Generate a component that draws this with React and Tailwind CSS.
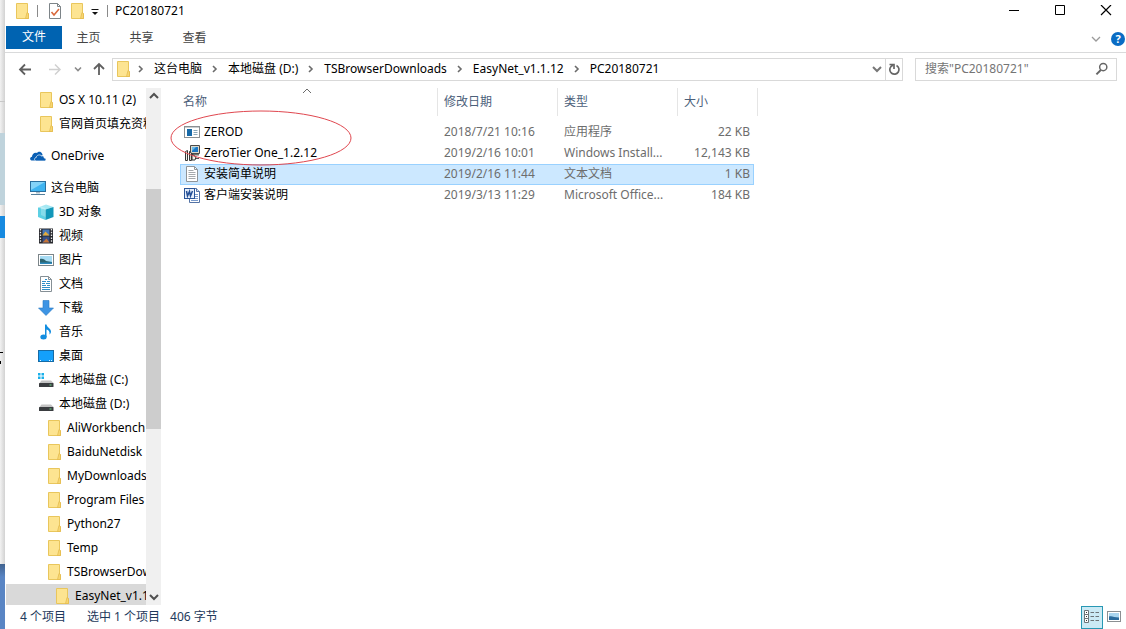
import React, { useState } from 'react';

const Folder = ({ className = '' }) => (
  <svg viewBox="0 0 16 16" className={`w-4 h-4 shrink-0 ${className}`}>
    <path d="M2.500.5h11v9.500l1 1v4.500h-12z" fill="#fde491" stroke="#e9c65c" />
    <path d="M13 9.500l-1.500 6h3v-5z" fill="#f7d672" stroke="#e3b94a" strokeWidth=".7" />
  </svg>
);

const Chevron = ({ d = 'M6 5l3 3-3 3', className = 'w-4 h-4', color = '#6b6b6b', width = 1.6 }) => (
  <svg viewBox="0 0 16 16" className={`shrink-0 ${className}`} fill="none" stroke={color} strokeWidth={width}>
    <path d={d} />
  </svg>
);

const Drive = () => (
  <>
    <path d="M3.500 8.500h9.500L15.500 11h-14z" fill="#c3c3c3" />
    <rect x="1" y="11" width="14.5" height="4" rx=".5" fill="#3a3d40" />
    <rect x="11.5" y="12.5" width="2" height="1" fill="#6fe08a" />
  </>
);

const sideIcons = {
  cloud: (
    <>
      <path d="M1.500 12.500C-.5 12-.3 9 2 8.700 2 6 4.500 4 7 5 8 3.200 11 3 12 5.500c.6 1.100.5 1 .5 1.700L7 8.500 5 12.500z" fill="#0a5fb4" />
      <path d="M6 13c-2-.3-2-3.200.2-3.500C6.500 7 10 6 11.500 8c1.500-.5 2.700.5 2.700 2 2.300.1 2.300 3 .3 3z" fill="#0a5fb4" stroke="#fff" strokeWidth=".7" />
    </>
  ),
  pc: (
    <>
      <rect x=".5" y="1.500" width="15" height="10" fill="#3fb4f0" stroke="#2a6f9e" />
      <path d="M1 2h14L1 10z" fill="#83d3f8" />
      <path d="M6 12h4v1.500H6z" fill="#a9bcc8" />
      <path d="M1 14.500h14" stroke="#557f9b" />
    </>
  ),
  cube: (
    <>
      <path d="M0 3.500L8 .5 15.500 3 7.500 5.500z" fill="#a5e8f3" />
      <path d="M0 3.500l7.500 2V16L0 13z" fill="#5dd0e4" />
      <path d="M7.500 5.500L15.500 3v10l-8 3z" fill="#1297b9" />
      <path d="M3 2.500l4.500 1.500v9L3 11z" fill="#fff" opacity=".25" />
    </>
  ),
  video: (
    <>
      <rect x="1" y=".5" width="14" height="15" fill="#27282d" />
      <path d="M2.500 1v14M13.500 1v14" stroke="#e8e8e8" strokeWidth="1.300" strokeDasharray="1.500 1.300" />
      <rect x="4.500" y="1.500" width="7" height="6" fill="#4577b8" />
      <path d="M4.500 7.500l3-4 4 4z" fill="#e3ab3c" />
      <rect x="4.500" y="8.500" width="7" height="6" fill="#354f88" />
      <path d="M4.500 14.500l4-4 3 4z" fill="#c57538" />
    </>
  ),
  picture: (
    <>
      <rect x=".5" y="2.500" width="15" height="11" fill="#fff" stroke="#7c8589" />
      <rect x="2" y="4" width="12" height="8" fill="#a7dcf4" />
      <path d="M2 7c3-1 5 1 6 2l6 1v2H2z" fill="#2c6470" />
      <path d="M2 10.500h12V12H2z" fill="#2c89bc" />
    </>
  ),
  doc: (
    <>
      <path d="M2.500.5h8l3 3v12h-11z" fill="#fff" stroke="#858f95" />
      <path d="M10.500.5v3h3" fill="none" stroke="#858f95" />
      <path d="M7 3.500h2M4 5.500h4M9 5.500h3M4 7.500h3M8 7.500h4M4 9.500h4M9 9.500h3M4 11.500h8M4 13.500h8" stroke="#2f8fc8" strokeWidth="1.200" />
    </>
  ),
  download: <path d="M5 .5h6V8h4.500L8 15.500.5 8H5z" fill="#3d94e4" stroke="#2879c5" strokeWidth=".6" />,
  music: (
    <>
      <path d="M7 .5h1.500c.5 3 4.500 4 4.500 7 0 1.300-.7 2.500-1.500 3 .5-3-1-4.500-3-5V13H7z" fill="#128de0" />
      <ellipse cx="5.500" cy="13" rx="3.200" ry="2.500" fill="#128de0" />
    </>
  ),
  desktop: (
    <>
      <rect x=".5" y="2.500" width="15" height="11" fill="#14a0fb" stroke="#176ba5" />
      <path d="M2 12.500h2M11 12.500h3" stroke="#dff2ff" strokeDasharray="1 1" />
    </>
  ),
  driveC: (
    <>
      <path d="M0 1h2.500v2.500H0zM3.500 1H6v2.500H3.500zM0 4.500h2.500V7H0zM3.500 4.500H6V7H3.500z" fill="#1ab0ea" />
      <Drive />
    </>
  ),
  driveD: <Drive />,
};

const tree = [
  { label: 'OS X 10.11 (2)', level: 1 },
  { label: '官网首页填充资料', level: 1 },
  { label: 'OneDrive', level: 0, icon: 'cloud' },
  { label: '这台电脑', level: 0, icon: 'pc' },
  { label: '3D 对象', level: 1, icon: 'cube' },
  { label: '视频', level: 1, icon: 'video' },
  { label: '图片', level: 1, icon: 'picture' },
  { label: '文档', level: 1, icon: 'doc' },
  { label: '下载', level: 1, icon: 'download' },
  { label: '音乐', level: 1, icon: 'music' },
  { label: '桌面', level: 1, icon: 'desktop' },
  { label: '本地磁盘 (C:)', level: 1, icon: 'driveC' },
  { label: '本地磁盘 (D:)', level: 1, icon: 'driveD' },
  { label: 'AliWorkbench', level: 2 },
  { label: 'BaiduNetdisk', level: 2 },
  { label: 'MyDownloads', level: 2 },
  { label: 'Program Files', level: 2 },
  { label: 'Python27', level: 2 },
  { label: 'Temp', level: 2 },
  { label: 'TSBrowserDownloads', level: 2 },
  { label: 'EasyNet_v1.1.12', level: 3, current: true },
];

const indent = ['pl-6', 'pl-8', 'pl-10', 'pl-12'];

const crumbs = ['这台电脑', '本地磁盘 (D:)', 'TSBrowserDownloads', 'EasyNet_v1.1.12', 'PC20180721'];

const fileIcons = {
  exe: (
    <>
      <rect x=".5" y="2.500" width="15" height="11" fill="#fff" stroke="#8b8f92" />
      <path d="M1 3.500h14" stroke="#c9cdd0" />
      <rect x="3" y="5" width="5" height="7" fill="#1769a8" />
      <path d="M9.500 6.500h4M9.500 8.500h4M9.500 10.500h4" stroke="#8ba7b8" />
    </>
  ),
  msi: (
    <>
      <path d="M6.500.5h9v8h-9z" fill="#dad8cd" stroke="#4a4a48" />
      <path d="M8 2h6v5H8z" fill="#1c77c4" />
      <path d="M8 2h4L8 6z" fill="#68bae8" />
      <path d="M9 9h6v1.500H9z" fill="#73726c" />
      <path d="M1.500 6.500l2-1v10h-2z" fill="#f1efe6" stroke="#353535" />
      <path d="M5.500 6.500l2 1.500v7.500h-2z" fill="#d9d6ca" stroke="#353535" />
      <path d="M8 9l4 3-1 3H8z" fill="#f1efe6" stroke="#353535" />
      <path d="M12 13.500h3" stroke="#555" />
    </>
  ),
  txt: (
    <>
      <path d="M2.500.5h8l3 3v12h-11z" fill="#fff" stroke="#8f9498" />
      <path d="M10.500.5v3h3" fill="none" stroke="#8f9498" />
      <path d="M4.500 4.500h5M4.500 6.500h7M4.500 8.500h7M4.500 10.500h7M4.500 12.500h7" stroke="#a5a9ac" />
    </>
  ),
  word: (
    <>
      <path d="M5.500 1.500h7l3 3v11h-10z" fill="#fff" stroke="#5473a5" />
      <path d="M12.500 1.500v3h3" fill="#c8d8ee" stroke="#5473a5" />
      <path d="M11 7.500h3M11 9.500h3M7 11.500h7M7 13.500h7" stroke="#7b9bcb" />
      <rect x=".5" y="1.500" width="10" height="10" fill="#e6effb" stroke="#2a5599" />
      <path d="M2.500 4l1 5 2-4.500 1 4.500 2-5" fill="none" stroke="#234f96" strokeWidth="1.500" />
    </>
  ),
};

const files = [
  { name: 'ZEROD', date: '2018/7/21 10:16', type: '应用程序', size: '22 KB', icon: 'exe' },
  { name: 'ZeroTier One_1.2.12', date: '2019/2/16 10:01', type: 'Windows Install...', size: '12,143 KB', icon: 'msi' },
  { name: '安装简单说明', date: '2019/2/16 11:44', type: '文本文档', size: '1 KB', icon: 'txt' },
  { name: '客户端安装说明', date: '2019/3/13 11:29', type: 'Microsoft Office...', size: '184 KB', icon: 'word' },
];

// Sliver of the windows behind this one
const Backdrop = () => (
  <div className="w-[5px] shrink-0 flex flex-col bg-linear-to-r from-[#f2f2f2] to-[#d2d2d2] overflow-hidden">
    <div className="h-[102px] border-b border-[#c8c8c8]" />
    <div className="h-[31px]" />
    <div className="h-[72px] bg-[#bfd3dc]" />
    <div className="h-[11px]" />
    <div className="h-[22px] bg-[#178ae0]" />
    <div className="h-[114px]" />
    <div className="h-[9px] border-t border-black w-[3px]" />
    <div className="h-[3px] w-px bg-black" />
    <div className="h-[200px]" />
    <div className="grow bg-linear-to-b from-[#41638f] to-[#5985c4] to-20%" />
  </div>
);

const TitleBar = () => (
  <header className="h-[26px] flex items-start pl-[9px]">
    <div className="h-[22px] flex items-center">
      <Folder />
      <span className="w-px h-3 bg-[#8a8a8a] ml-[7px] mr-[9px]" />
      <button aria-label="属性">
        <svg viewBox="0 0 16 16" className="w-4 h-4">
          <path d="M2.500.5h8l3 3v12h-11z" fill="#fff" stroke="#7d8488" />
          <path d="M10.500.5v3h3" fill="none" stroke="#7d8488" />
          <path d="M4.500 9l2.500 3 5-6" fill="none" stroke="#d9693c" strokeWidth="1.600" />
        </svg>
      </button>
      <button aria-label="新建文件夹" className="ml-[6px]"><Folder /></button>
      <button aria-label="自定义快速访问工具栏" className="ml-[2px]">
        <svg viewBox="0 0 16 16" className="w-4 h-4">
          <path d="M4.500 6.500h7" stroke="#111" />
          <path d="M5 9h6l-3 3z" fill="#111" />
        </svg>
      </button>
      <span className="w-px h-3 bg-[#8a8a8a] ml-1 mr-[7px]" />
      <h1>PC20180721</h1>
    </div>
    <div className="ml-auto flex h-[22px] items-center gap-[34px] pr-[14px]">
      <button aria-label="最小化">
        <svg viewBox="0 0 12 12" className="w-3 h-3"><path d="M1 5.500h10" stroke="#000" /></svg>
      </button>
      <button aria-label="最大化">
        <svg viewBox="0 0 12 12" className="w-3 h-3"><path d="M1.500.5h9v9h-9z" fill="none" stroke="#000" /></svg>
      </button>
      <button aria-label="关闭">
        <svg viewBox="0 0 12 12" className="w-3 h-3"><path d="M1 0l10 10M11 0L1 10" stroke="#000" strokeWidth="1.200" /></svg>
      </button>
    </div>
  </header>
);

const Ribbon = () => (
  <nav className="h-[27px] flex items-start border-b border-[#d9dadb] pl-px">
    <button className="w-14 h-[23px] bg-[#0063b1] text-white">文件</button>
    <button className="w-[53px] h-[25px] text-[#444]">主页</button>
    <button className="w-[53px] h-[25px] text-[#444]">共享</button>
    <button className="w-[53px] h-[25px] text-[#444]">查看</button>
    <div className="ml-auto flex items-center gap-[7px] h-[26px] pr-px">
      <button aria-label="展开功能区">
        <Chevron d="M4 6l4 4 4-4" color="#9a9a9a" width={1.300} />
      </button>
      <button aria-label="帮助" className="w-[14px] h-[14px] rounded-full bg-[#0a6cc4] text-white font-bold text-[11px] leading-[14px]">?</button>
    </div>
  </nav>
);

const AddressBar = () => (
  <div className="flex items-center h-[35px] pl-3 pr-[9px] pb-[2px]">
    <button aria-label="后退">
      <Chevron d="M14 8.500H3M8 3.500l-5 5 5 5" width={1.800} color="#5f5f5f" />
    </button>
    <button aria-label="前进" className="ml-[14px]">
      <Chevron d="M2 8.500h11M8 3.500l5 5-5 5" width={1.500} color="#d0d0d0" />
    </button>
    <button aria-label="最近浏览的位置" className="ml-[7px]">
      <Chevron d="M5 6.500l3 3 3-3" color="#8a8a8a" />
    </button>
    <button aria-label="上移" className="ml-[5px]">
      <Chevron d="M8 14V3M3 8l5-5 5 5" width={1.800} color="#5f5f5f" />
    </button>
    <div className="ml-[5px] grow flex items-center h-[23px] border border-[#d9d9d9] pl-[2px]">
      <Folder />
      <ol className="flex items-center grow">
        {crumbs.map((crumb, i) => (
          <li key={crumb} className="flex items-center">
            <Chevron className={`w-4 h-4 mr-[5px] ${i === 0 ? 'ml-[2px]' : 'ml-[5px]'}`} />
            <a href="#" className="whitespace-nowrap">{crumb}</a>
          </li>
        ))}
      </ol>
      <button aria-label="以前的位置">
        <Chevron d="M4 6l4 4 4-4" width={2} color="#777" />
      </button>
      <button aria-label="刷新" className="h-full w-[17px] border-l border-[#d9d9d9] flex items-center justify-center">
        <svg viewBox="0 0 14 14" className="w-[14px] h-[14px]" fill="none" stroke="#666" strokeWidth="1.700">
          <path d="M9.500 3.500A4.600 4.600 0 1 1 4 4.500L6 3" />
          <path d="M2.500 2.500h4.500v4.500" />
        </svg>
      </button>
    </div>
    <label className="ml-3 w-[202px] h-[23px] border border-[#d9d9d9] flex items-center pl-[9px] pr-[6px]">
      <input type="text" aria-label="搜索" placeholder={'搜索"PC20180721"'} className="grow min-w-0 outline-none placeholder:text-[#757575]" />
      <svg viewBox="0 0 16 16" className="w-4 h-4" fill="none" stroke="#666">
        <circle cx="9.500" cy="6" r="3.700" strokeWidth="1.500" />
        <path d="M7 9l-4.500 4.500" strokeWidth="2" />
      </svg>
    </label>
  </div>
);

const Sidebar = () => (
  <aside className="w-[156px] shrink-0 flex pl-px">
    <ul className="grow min-w-0 overflow-hidden">
      {tree.map((node) => (
        <li key={node.label} className={node.level === 0 ? 'pt-2' : ''}>
          <a
            href="#"
            className={`h-6 flex items-center gap-[5px] ${indent[node.level]} ${node.current ? 'bg-[#d9d9d9]' : ''}`}
          >
            {node.icon ? (
              <svg viewBox="0 0 16 16" className="w-4 h-4 shrink-0">{sideIcons[node.icon]}</svg>
            ) : (
              <Folder />
            )}
            <span className="whitespace-nowrap">{node.label}</span>
          </a>
        </li>
      ))}
    </ul>
    <div className="w-[15px] shrink-0 bg-[#f0f0f0] flex flex-col">
      <button aria-label="向上滚动" className="h-[17px] flex items-center justify-center">
        <Chevron d="M4 10l4-4 4 4" width={2} color="#505050" />
      </button>
      <div className="grow-[84]" />
      <div className="grow-[240] bg-[#cdcdcd]" />
      <div className="grow-[159]" />
      <button aria-label="向下滚动" className="h-[17px] flex items-center justify-center">
        <Chevron d="M4 6l4 4 4-4" width={2} color="#505050" />
      </button>
    </div>
  </aside>
);

const FileList = () => {
  const [selected, setSelected] = useState('安装简单说明');

  return (
    <main className="relative grow pl-[19px] overflow-hidden">
      <table className="table-fixed w-[578px] border-separate border-spacing-0 text-left">
        <colgroup>
          <col className="w-[258px]" />
          <col className="w-[120px]" />
          <col className="w-[120px]" />
          <col className="w-[76px]" />
          <col className="w-[4px]" />
        </colgroup>
        <thead className="text-[#4c607a]">
          <tr className="h-7">
            <th className="font-normal pl-[3px] border-r border-[#e5e5e5]">名称</th>
            <th className="font-normal pl-[6px] border-r border-[#e5e5e5]">修改日期</th>
            <th className="font-normal pl-[6px] border-r border-[#e5e5e5]">类型</th>
            <th className="font-normal pl-[6px]">大小</th>
            <th className="border-r border-[#e5e5e5]" />
          </tr>
          <tr className="h-[6px]"><td colSpan={5} /></tr>
        </thead>
        <tbody className="text-[#6d6d6d]">
          {files.map((file) => {
            const cell = selected === file.name ? 'bg-[#cce8ff] border-[#99d1ff]' : 'border-transparent';
            return (
              <tr key={file.name} className="h-[21px]" onClick={() => setSelected(file.name)}>
                <td className={`border-y border-l p-0 pl-[3px] ${cell}`}>
                  <div className="flex items-center gap-1 text-black">
                    <svg viewBox="0 0 16 16" className="w-4 h-4 shrink-0">{fileIcons[file.icon]}</svg>
                    {file.name}
                  </div>
                </td>
                <td className={`border-y p-0 pl-[6px] ${cell}`}>{file.date}</td>
                <td className={`border-y p-0 pl-[6px] whitespace-nowrap ${cell}`}>{file.type}</td>
                <td className={`border-y border-r p-0 pr-[3px] text-right whitespace-nowrap ${cell}`}>{file.size}</td>
                <td />
              </tr>
            );
          })}
        </tbody>
      </table>
      {/* Sort direction of the name column */}
      <svg viewBox="0 0 10 6" className="absolute left-[141px] top-0 w-[10px] h-[6px]" fill="none" stroke="#6b6b6b">
        <path d="M1 5l4-4 4 4" />
      </svg>
      {/* Marked files */}
      <svg viewBox="0 0 182 56" className="absolute left-[9px] top-[22px] w-[182px] h-[56px] pointer-events-none">
        <ellipse cx="91" cy="28" rx="90" ry="27" fill="none" stroke="#e0474f" />
      </svg>
    </main>
  );
};

const StatusBar = () => (
  <footer className="h-6 shrink-0 flex items-center pl-[15px] pr-px text-[#1e395b]">
    <span>4 个项目</span>
    <span className="ml-[21px]">选中 1 个项目</span>
    <span className="ml-[10px]">406 字节</span>
    <div className="ml-auto flex items-center gap-[2px]">
      <button aria-label="详细信息" className="w-[22px] h-[23px] bg-[#cbeaf5] border border-[#2898b4] flex items-center justify-center">
        <svg viewBox="0 0 16 14" className="w-4 h-[14px]" fill="none" stroke="#6c7478">
          <path d="M.5.500h4v12h-4zM.5 4.500h4M.5 8.500h4" fill="#fff" />
          <path d="M2 2.500h1M2 6.500h1M2 10.500h1" stroke="#333" />
          <path d="M6.500 2.500H10M11.500 2.500H15M6.500 6.500H10M11.500 6.500H15M6.500 10.500H10M11.500 10.500H15" />
        </svg>
      </button>
      <button aria-label="大缩略图" className="w-5 pl-[2px]">
        <svg viewBox="0 0 14 12" className="w-[14px] h-3">
          <rect x=".5" y=".5" width="13" height="10" fill="#fff" stroke="#8b8f92" />
          <path d="M2 2h10v7H2z" fill="#a9d5ef" />
          <path d="M2 5.500c3-1 5 1 10 1V9H2z" fill="#2a6a9c" />
        </svg>
      </button>
    </div>
  </footer>
);

const App = () => {
  return (
    <div className="h-screen flex overflow-hidden bg-white text-black text-[12px] leading-[18px] font-['Noto_Sans','Noto_Sans_CJK_SC',sans-serif]">
      <Backdrop />
      <div className="grow min-w-0 flex flex-col">
        <TitleBar />
        <Ribbon />
        <AddressBar />
        <div className="grow min-h-0 flex">
          <Sidebar />
          <FileList />
        </div>
        <StatusBar />
      </div>
    </div>
  );
};

export default App;
